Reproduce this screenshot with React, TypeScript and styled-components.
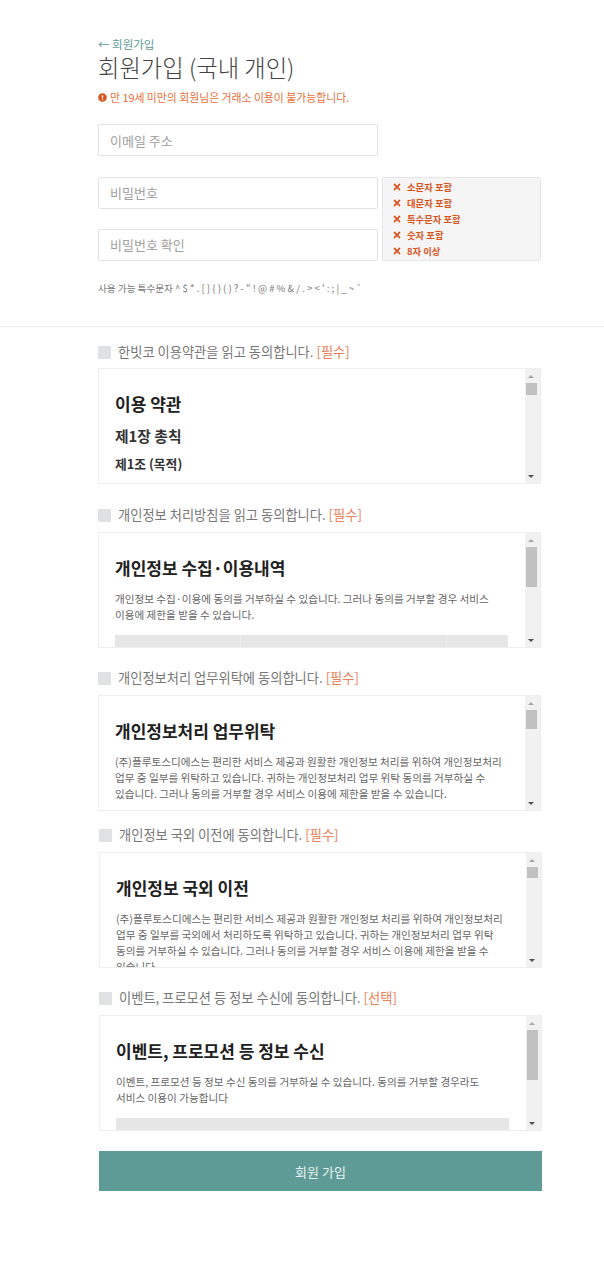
import React from "react";
import styled, { createGlobalStyle } from "styled-components";
import { FaExclamationCircle, FaTimes } from "react-icons/fa";

const GlobalStyle = createGlobalStyle`
  html, body {
    margin: 0;
    padding: 0;
    background: #fff;
  }
  body, input, button {
    font-family: "Noto Sans CJK KR", "Noto Sans", sans-serif;
  }
  * {
    box-sizing: border-box;
  }
`;

const rules = ["소문자 포함", "대문자 포함", "특수문자 포함", "숫자 포함", "8자 이상"];

type Term = {
  label: string;
  tag: string;
  gap: number;
  boxGap: number;
  shift: number;
  thumb: number;
  title: string;
  subs?: string[];
  body?: string[];
  columns?: number[];
};

const terms: Term[] = [
  {
    label: "한빗코 이용약관을 읽고 동의합니다.",
    tag: "[필수]",
    gap: 16,
    boxGap: 7,
    shift: 0,
    thumb: 12,
    title: "이용 약관",
    subs: ["제1장 총칙", "제1조 (목적)"],
  },
  {
    label: "개인정보 처리방침을 읽고 동의합니다.",
    tag: "[필수]",
    gap: 22,
    boxGap: 8,
    shift: 0,
    thumb: 40,
    title: "개인정보 수집·이용내역",
    body: [
      "개인정보 수집·이용에 동의를 거부하실 수 있습니다. 그러나 동의를 거부할 경우 서비스",
      "이용에 제한을 받을 수 있습니다.",
    ],
    columns: [126, 206, 61],
  },
  {
    label: "개인정보처리 업무위탁에 동의합니다.",
    tag: "[필수]",
    gap: 21,
    boxGap: 8,
    shift: 0,
    thumb: 19,
    title: "개인정보처리 업무위탁",
    body: [
      "(주)플루토스디에스는 편리한 서비스 제공과 원활한 개인정보 처리를 위하여 개인정보처리",
      "업무 중 일부를 위탁하고 있습니다. 귀하는 개인정보처리 업무 위탁 동의를 거부하실 수",
      "있습니다. 그러나 동의를 거부할 경우 서비스 이용에 제한을 받을 수 있습니다.",
    ],
  },
  {
    label: "개인정보 국외 이전에 동의합니다.",
    tag: "[필수]",
    gap: 15,
    boxGap: 8,
    shift: 1,
    thumb: 11,
    title: "개인정보 국외 이전",
    body: [
      "(주)플루토스디에스는 편리한 서비스 제공과 원활한 개인정보 처리를 위하여 개인정보처리",
      "업무 중 일부를 국외에서 처리하도록 위탁하고 있습니다. 귀하는 개인정보처리 업무 위탁",
      "동의를 거부하실 수 있습니다. 그러나 동의를 거부할 경우 서비스 이용에 제한을 받을 수",
      "있습니다",
    ],
  },
  {
    label: "이벤트, 프로모션 등 정보 수신에 동의합니다.",
    tag: "[선택]",
    gap: 21,
    boxGap: 8,
    shift: 1,
    thumb: 50,
    title: "이벤트, 프로모션 등 정보 수신",
    body: [
      "이벤트, 프로모션 등 정보 수신 동의를 거부하실 수 있습니다. 동의를 거부할 경우라도",
      "서비스 이용이 가능합니다",
    ],
    columns: [393],
  },
];

export default function App() {
  return (
    <Page>
      <GlobalStyle />
      <Header>
        <BackLink>← 회원가입</BackLink>
        <Title>회원가입 (국내 개인)</Title>
        <Warning>
          <FaExclamationCircle size={9} />
          만 19세 미만의 회원님은 거래소 이용이 불가능합니다.
        </Warning>
        <EmailInput placeholder="이메일 주소" />
        <PasswordRow>
          <PasswordFields>
            <TextInput placeholder="비밀번호" />
            <TextInput placeholder="비밀번호 확인" />
          </PasswordFields>
          <RuleBox>
            {rules.map((rule) => (
              <Rule key={rule}>
                <FaTimes size={10} />
                {rule}
              </Rule>
            ))}
          </RuleBox>
        </PasswordRow>
        <Hint>사용 가능 특수문자 ^ $ * . [ ] {"{ }"} ( ) ? - " ! @ # % &amp; / . &gt; &lt; ' : ; | _ ~ `</Hint>
      </Header>
      <Divider />
      <Agreements>
        {terms.map((term) => (
          <Agreement key={term.label} $gap={term.gap} $shift={term.shift}>
            <AgreeRow>
              <CheckBox />
              <AgreeLabel>
                {term.label} <Tag>{term.tag}</Tag>
              </AgreeLabel>
            </AgreeRow>
            <TermsBox $gap={term.boxGap}>
              <TermsContent>
                <TermsTitle>{term.title}</TermsTitle>
                {term.subs && (
                  <>
                    <Chapter>{term.subs[0]}</Chapter>
                    <Article>{term.subs[1]}</Article>
                  </>
                )}
                {term.body && (
                  <TermsBody>
                    {term.body.map((line) => (
                      <BodyLine key={line}>{line}</BodyLine>
                    ))}
                  </TermsBody>
                )}
                {term.columns && (
                  <TableHead>
                    {term.columns.map((width) => (
                      <TableCell key={width} style={{ width }} />
                    ))}
                  </TableHead>
                )}
              </TermsContent>
              <Scrollbar>
                <ArrowUp />
                <Thumb style={{ height: term.thumb }} />
                <ArrowDown />
              </Scrollbar>
            </TermsBox>
          </Agreement>
        ))}
        <SubmitButton>회원 가입</SubmitButton>
      </Agreements>
    </Page>
  );
}

const Page = styled.div`
  width: 604px;
  height: 1280px;
  overflow: hidden;
  background: #fff;
`;

const Header = styled.header`
  padding: 37px 0 0 98px;
  height: 326px;
`;

const BackLink = styled.div`
  height: 14px;
  font-size: 11.5px;
  line-height: 14px;
  color: #5e9a96;
`;

const Title = styled.h1`
  margin: 1px 0 0;
  height: 30px;
  font-size: 23.3px;
  line-height: 30px;
  font-weight: 300;
  color: #444;
`;

const Warning = styled.div`
  display: flex;
  align-items: center;
  gap: 3px;
  height: 16px;
  margin-top: 7px;
  font-size: 10.85px;
  line-height: 16px;
  color: #e8703a;

  svg {
    color: #d9541e;
  }
`;

const TextInput = styled.input`
  display: block;
  width: 280px;
  height: 32px;
  padding: 0 11px;
  border: 1px solid #e2e2e2;
  border-radius: 2px;
  background: #fff;
  font-size: 13px;
  outline: none;

  &::placeholder {
    color: #a0a0a0;
    opacity: 1;
  }
`;

const EmailInput = styled(TextInput)`
  margin-top: 19px;
`;

const PasswordRow = styled.div`
  display: flex;
  gap: 4px;
  margin-top: 21px;
`;

const PasswordFields = styled.div`
  display: flex;
  flex-direction: column;
  justify-content: space-between;
  height: 84px;

  input {
    padding-bottom: 2px;
  }
`;

const RuleBox = styled.ul`
  width: 159px;
  height: 84px;
  margin: 0;
  padding: 1px 0 0 9px;
  list-style: none;
  border: 1px solid #e6e6e6;
  border-radius: 2px;
  background: #f5f5f5;
`;

const Rule = styled.li`
  display: flex;
  align-items: center;
  gap: 5px;
  height: 16px;
  font-size: 9.35px;
  line-height: 16px;
  font-weight: 700;
  color: #d9541e;
`;

const Hint = styled.div`
  margin-top: 20px;
  font-size: 9.6px;
  line-height: 14px;
  color: #777;
`;

const Divider = styled.div`
  height: 1px;
  background: #ececec;
`;

const Agreements = styled.main`
  padding-left: 98px;
`;

const Agreement = styled.section<{ $gap: number; $shift: number }>`
  width: 443px;
  margin-top: ${(props) => props.$gap}px;
  margin-left: ${(props) => props.$shift}px;
`;

const AgreeRow = styled.div`
  display: flex;
  align-items: center;
  gap: 7px;
  height: 18px;
`;

const CheckBox = styled.span`
  width: 13px;
  height: 13px;
  border-radius: 1px;
  background: #dfe1e3;
`;

const AgreeLabel = styled.span`
  font-size: 13.25px;
  line-height: 18px;
  color: #777;
`;

const Tag = styled.span`
  color: #e8825a;
`;

const TermsBox = styled.div<{ $gap: number }>`
  display: flex;
  height: 116px;
  margin-top: ${(props) => props.$gap}px;
  overflow: hidden;
  border: 1px solid #eeeeee;
  background: #fff;
`;

const TermsContent = styled.div`
  flex: 1;
  min-width: 0;
  overflow: hidden;
  padding: 21px 0 0 16px;
`;

const TermsTitle = styled.h2`
  margin: 0;
  font-size: 17px;
  line-height: 28px;
  font-weight: 700;
  color: #212121;
`;

const Chapter = styled.h3`
  margin: 6px 0 0;
  font-size: 14.8px;
  line-height: 24px;
  font-weight: 700;
  color: #333;
`;

const Article = styled.h4`
  margin: 4px 0 0;
  font-size: 12.8px;
  line-height: 24px;
  font-weight: 700;
  color: #333;
`;

const TermsBody = styled.div`
  margin-top: 9px;
`;

const BodyLine = styled.p`
  margin: 0;
  font-size: 10.6px;
  line-height: 16px;
  white-space: nowrap;
  color: #666;
`;

const TableHead = styled.div`
  display: flex;
  width: 393px;
  height: 40px;
  margin-top: 12px;
  background: #e6e6e6;
`;

const TableCell = styled.div`
  height: 100%;
  border-right: 1px solid #eeeeee;

  &:last-child {
    border-right: 0;
  }
`;

const Scrollbar = styled.div`
  flex: 0 0 15px;
  display: flex;
  flex-direction: column;
  align-items: center;
  height: 100%;
  padding: 4px 3px 4px 0;
  background: #f1f1f1;
`;

const ArrowUp = styled.span`
  flex: 0 0 auto;
  width: 0;
  height: 0;
  margin: 2px 0 5px;
  border-left: 3px solid transparent;
  border-right: 3px solid transparent;
  border-bottom: 3px solid #a8a8a8;
`;

const ArrowDown = styled.span`
  flex: 0 0 auto;
  width: 0;
  height: 0;
  margin-top: auto;
  margin-bottom: 1px;
  border-left: 3px solid transparent;
  border-right: 3px solid transparent;
  border-top: 3px solid #505050;
`;

const Thumb = styled.span`
  flex: 0 0 auto;
  width: 11px;
  background: #c1c1c1;
`;

const SubmitButton = styled.button`
  display: block;
  width: 443px;
  height: 40px;
  margin: 20px 0 0 1px;
  border: 0;
  background: #5f9b96;
  font-size: 13px;
  color: #e8f2f0;
`;
